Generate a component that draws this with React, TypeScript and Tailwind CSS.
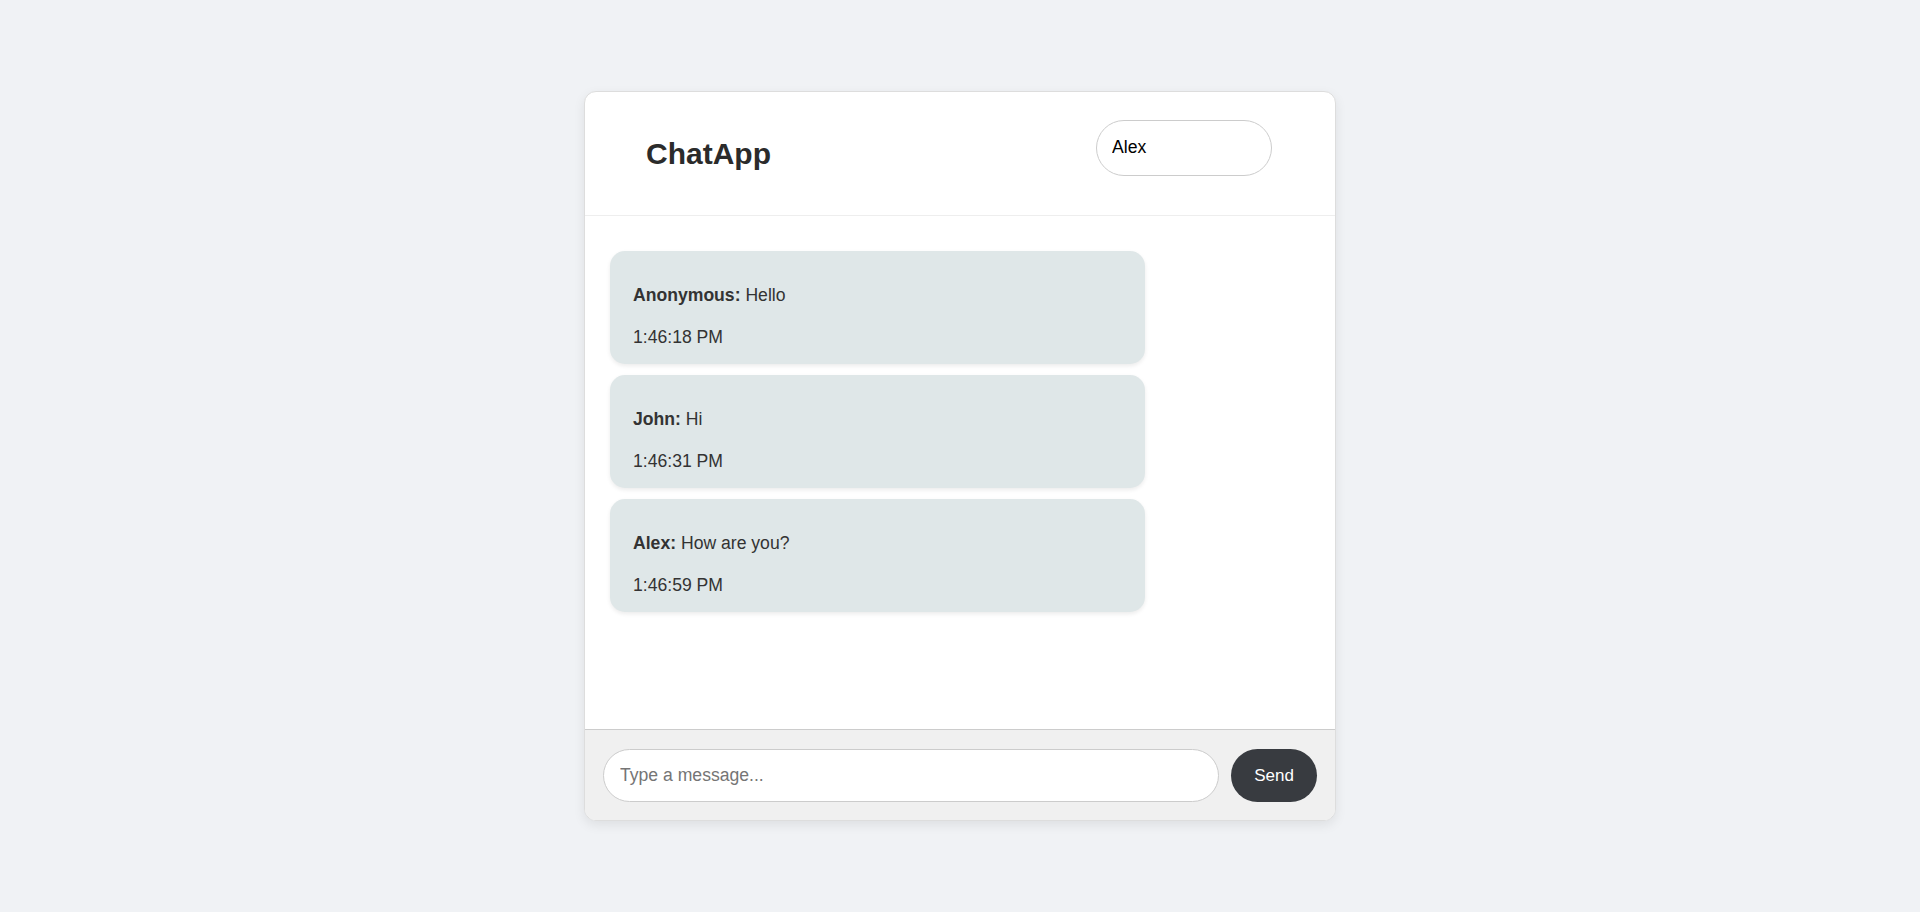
import { useState } from 'react';

type Message = {
  user: string;
  text: string;
  time: string;
};

const initialMessages: Message[] = [
  { user: 'Anonymous', text: 'Hello', time: '1:46:18 PM' },
  { user: 'John', text: 'Hi', time: '1:46:31 PM' },
  { user: 'Alex', text: 'How are you?', time: '1:46:59 PM' },
];

export default function App() {
  const [username, setUsername] = useState('Alex');
  const [draft, setDraft] = useState('');
  const [messages, setMessages] = useState<Message[]>(initialMessages);

  const sendMessage = () => {
    if (!draft.trim()) return;
    setMessages([
      ...messages,
      {
        user: username || 'Anonymous',
        text: draft,
        time: new Date().toLocaleTimeString('en-US'),
      },
    ]);
    setDraft('');
  };

  return (
    <div className="min-h-screen bg-[#f0f2f5] flex items-center justify-center font-['Liberation_Sans',Arial,sans-serif] text-[#333]">
      <div className="w-[752px] h-[80vh] flex flex-col bg-white border border-[#dddddd] rounded-xl shadow-[0_4px_12px_rgba(0,0,0,0.08)] overflow-hidden">
        <header className="h-[124px] shrink-0 flex items-center justify-between pl-[61px] pr-[63px] border-b border-[#eeeeee]">
          <h1 className="text-[30px] font-bold text-[#2b2b2b]">ChatApp</h1>
          <input
            value={username}
            onChange={(e) => setUsername(e.target.value)}
            className="mb-[12px] w-[176px] h-[56px] px-[15px] rounded-full border border-[#cccccc] bg-white text-[17.6px] text-black outline-none"
          />
        </header>

        <div className="flex-1 overflow-y-auto pt-[35px] px-[25px] flex flex-col gap-[11px]">
          {messages.map((m, i) => (
            <div
              key={i}
              className="w-[535px] shrink-0 bg-[#dfe7e8] rounded-[15px] shadow-[0_2px_4px_rgba(0,0,0,0.08)] pt-[34px] pb-[17px] px-[23px] text-[17.6px] leading-[20px] text-[#333]"
            >
              <p>
                <strong className="font-bold">{m.user}:</strong> {m.text}
              </p>
              <p className="mt-[22px]">{m.time}</p>
            </div>
          ))}
        </div>

        <form
          className="shrink-0 flex gap-[12px] bg-[#f0f0f0] border-t border-[#cccccc] pt-[19px] pb-[18px] px-[18px]"
          onSubmit={(e) => {
            e.preventDefault();
            sendMessage();
          }}
        >
          <input
            value={draft}
            onChange={(e) => setDraft(e.target.value)}
            placeholder="Type a message..."
            className="flex-1 h-[53px] px-4 rounded-full border border-[#cccccc] bg-white text-[17.6px] text-black placeholder:text-[#757575] outline-none"
          />
          <button
            type="submit"
            className="w-[86px] h-[53px] rounded-full bg-[#383b40] text-white text-[17px] cursor-pointer"
          >
            Send
          </button>
        </form>
      </div>
    </div>
  );
}
